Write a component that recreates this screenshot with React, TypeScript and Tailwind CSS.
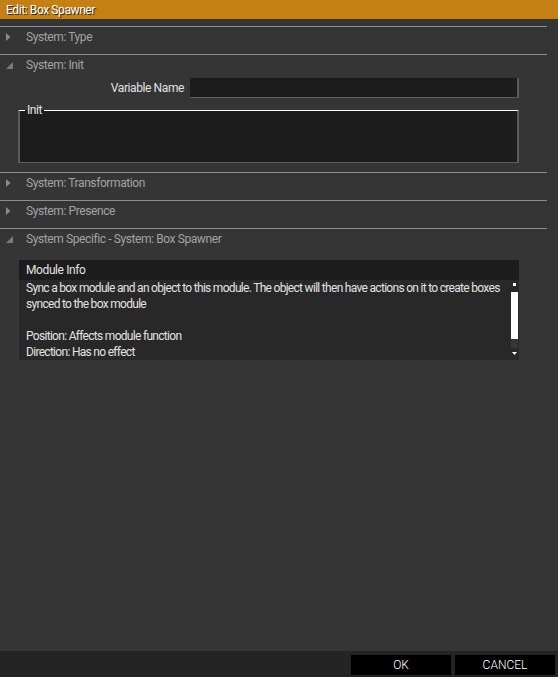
import React from "react"

const font = { fontFamily: "Roboto, 'Liberation Sans', sans-serif" }

function Arrow({ open }: { open: boolean }) {
  return (
    <svg width="20" height="20" viewBox="0 0 20 20" className="shrink-0">
      {open ? (
        <polygon points="13,7 13,14 6,14" fill="#7a7a7a" />
      ) : (
        <polygon points="6,6 10.5,10 6,14" fill="#8a8a8a" />
      )}
    </svg>
  )
}

function Section({
  title,
  open = false,
  children,
  bottom = 7,
}: {
  title: string
  open?: boolean
  children?: React.ReactNode
  bottom?: number
}) {
  return (
    <div className="w-[547px] border-t border-[#8e8e8e]" style={{ paddingBottom: bottom }}>
      <div className="flex h-[20px] items-center">
        <Arrow open={open} />
        <span className="ml-[6px] text-[12px] tracking-[-0.4px] text-[#a3a3a3]">{title}</span>
      </div>
      {children}
    </div>
  )
}

const infoLines = [
  "Sync a box module and an object to this module. The object will then have actions on it to create boxes",
  "synced to the box module",
  "",
  "Position: Affects module function",
  "Direction: Has no effect",
]

export default function App() {
  return (
    <div className="flex h-[677px] w-[558px] flex-col bg-[#353535] select-none" style={font}>
      {/* title bar */}
      <div className="flex h-[19px] items-center bg-[#c58015] pl-[6px]">
        <span className="text-[12px] tracking-[-0.4px] text-white [text-shadow:1px_1px_0_#3a2a10]">
          Edit: Box Spawner
        </span>
      </div>

      <div className="flex-1 pt-[7px]">
        <Section title="System: Type" />

        <Section title="System: Init" open bottom={9}>
          <div className="mt-[3px] flex h-[20px] items-center">
            <span className="w-[184px] text-right text-[12px] tracking-[-0.4px] text-[#e2e2e2]">
              Variable Name
            </span>
            <div className="ml-[6px] h-[20px] w-[329px] border-r-2 border-b border-[#5c5c5c] bg-[#1c1c1c]" />
          </div>
          <fieldset className="mt-[5px] ml-[18px] h-[60px] w-[501px] border-t border-l-2 border-r-2 border-b border-t-white border-l-[#5c5c5c] border-r-[#5c5c5c] border-b-[#5c5c5c] bg-[#1c1c1c]">
            <legend className="ml-[5px] px-[2px] text-[12px] leading-[14px] tracking-[-0.4px] text-[#e6e6e6]">
              Init
            </legend>
          </fieldset>
        </Section>

        <Section title="System: Transformation" />
        <Section title="System: Presence" />

        <Section title="System Specific - System: Box Spawner" open>
          <div className="mt-[11px] ml-[19px] w-[500px]">
            <div className="flex h-[20px] items-center bg-[#1c1c1c] pl-[7px] text-[12px] tracking-[-0.4px] text-[#e2e2e2]">
              Module Info
            </div>
            <div className="flex h-[80px] bg-[#282828]">
              <div className="flex-1 overflow-hidden pl-[7px] text-[12px] leading-[16px] tracking-[-0.7px] text-[#e2e2e2]">
                {infoLines.map((line, i) => (
                  <div key={i} className="h-[16px] whitespace-nowrap">
                    {line}
                  </div>
                ))}
              </div>
              {/* scrollbar */}
              <div className="flex w-[7px] flex-col items-center">
                <div className="mt-[3px] h-[3px] w-[3px] bg-white" />
                <div className="mt-[6px] h-[47px] w-[7px] bg-white" />
                <div className="h-[9px] w-[7px] bg-[#363636]" />
                <svg width="5" height="4" viewBox="0 0 5 4" className="mt-[4px]">
                  <polygon points="0,0 5,0 2.5,3" fill="#fff" />
                </svg>
              </div>
              <div className="w-[1px]" />
            </div>
          </div>
        </Section>
      </div>

      {/* footer */}
      <div className="flex h-[26px] justify-end gap-[4px] bg-[#242424] pt-[4px] pr-[3px]">
        <button className="h-[20px] w-[100px] bg-black text-[12px] font-light text-white">OK</button>
        <button className="h-[20px] w-[100px] bg-black text-[12px] font-light text-white">CANCEL</button>
      </div>
    </div>
  )
}
